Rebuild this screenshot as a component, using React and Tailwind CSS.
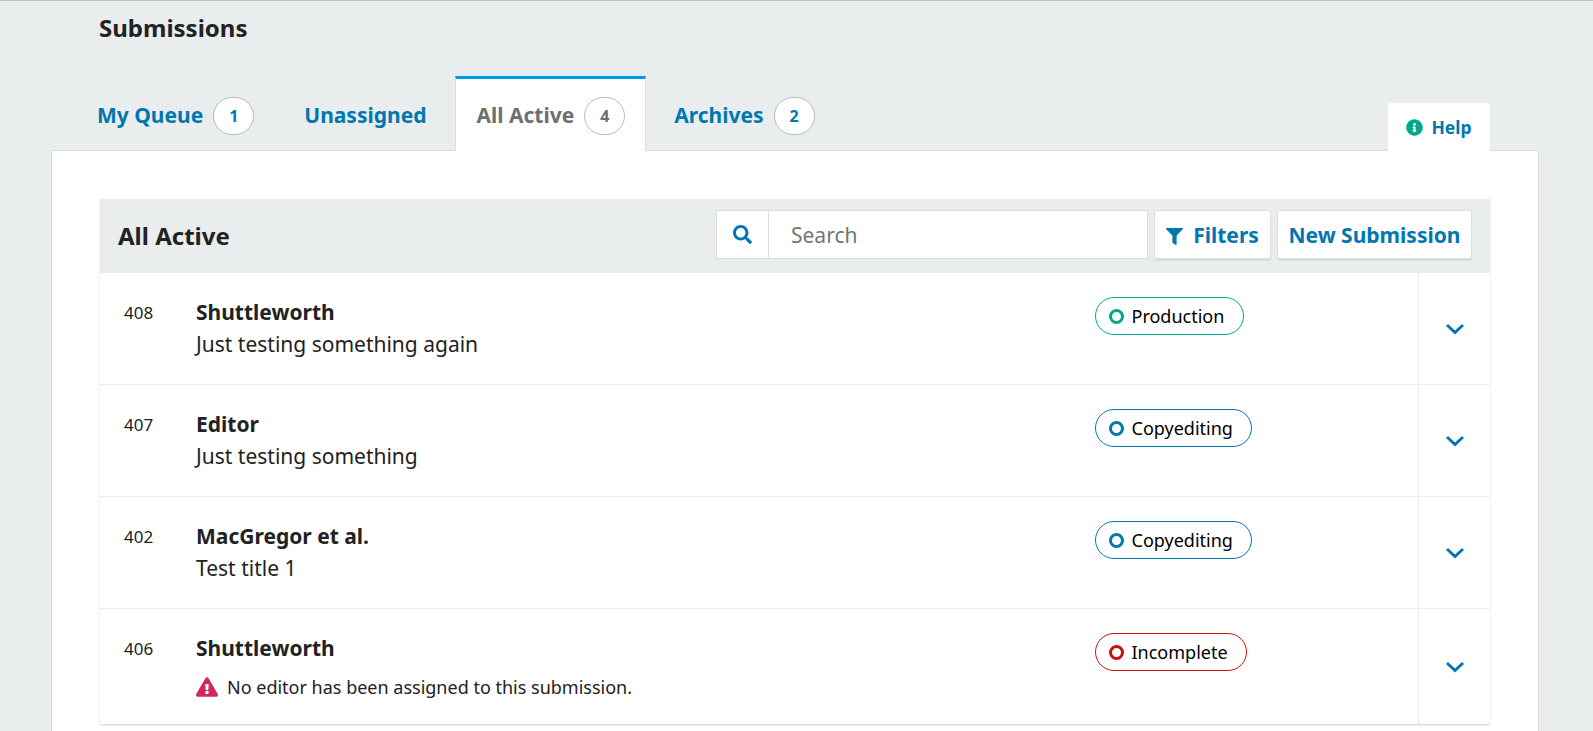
import React from "react";
import { FaSearch, FaFilter, FaInfoCircle, FaExclamationTriangle } from "react-icons/fa";

const blue = "text-[#0077b0]";

function Badge({ n, active }) {
  return (
    <span className={`ml-[10px] flex h-[38px] w-[41px] items-center justify-center rounded-full border border-[#bbbbbb] bg-white text-[16px] font-bold ${active ? "text-[#6f6f6f]" : blue}`}>
      {n}
    </span>
  );
}

function Tab({ label, n, active, className = "" }) {
  if (active) {
    return (
      <div className={`relative z-10 -mb-px flex h-[75px] items-center border-x border-[#dddddd] border-t-[3px] border-t-[#009de5] bg-white pl-[20px] pr-[20px] pt-[2px] ${className}`}>
        <span className="text-[21px] font-bold text-[#6f6f6f]">{label}</span>
        {n && <Badge n={n} active />}
      </div>
    );
  }
  return (
    <div className={`flex h-[74px] items-center pt-[6px] ${className}`}>
      <span className={`text-[21px] font-bold ${blue}`}>{label}</span>
      {n && <Badge n={n} />}
    </div>
  );
}

function Status({ label, ring, border, w }) {
  return (
    <span className={`flex h-[38px] items-center rounded-full border bg-white pl-[13px] text-[18px] leading-none text-black ${border} ${w}`}>
      <span className={`mr-[7.5px] h-[15px] w-[15px] rounded-full border-[3px] ${ring}`} />
      {label}
    </span>
  );
}

function Chevron() {
  return (
    <svg width="20" height="12" viewBox="0 0 20 12" fill="none" className="text-[#0077b0]">
      <path d="M2 2 L10 9.5 L18 2" stroke="currentColor" strokeWidth="3" />
    </svg>
  );
}

function Row({ id, author, title, warning, status, last }) {
  return (
    <div className={`flex ${last ? "h-[115px]" : "h-[112px] border-b border-[#eeeeee]"}`}>
      <div className="flex min-w-0 flex-1">
        <div className="w-[96px] pl-[24px] pt-[28px] text-[17px] leading-[24px] text-[#222222]">{id}</div>
        <div className="w-[899px] pt-[24px]">
          <div className="text-[21px] font-bold leading-[30px] text-[#222222]">{author}</div>
          {title && <div className="mt-[2px] text-[21px] leading-[30px] text-[#222222]">{title}</div>}
          {warning && (
            <div className="mt-[9px] flex h-[30px] items-center text-[18px] text-[#222222]">
              <FaExclamationTriangle className="mr-[9px] h-[22px] w-[22px] text-[#cf2a5c]" />
              {warning}
            </div>
          )}
        </div>
        <div className="pt-[24px]">{status}</div>
      </div>
      <div className="flex w-[72px] shrink-0 items-center justify-center border-l border-[#eeeeee]">
        <Chevron />
      </div>
    </div>
  );
}

export default function App() {
  return (
    <div className="h-[731px] overflow-hidden border-t border-[#b9bfc2] bg-[#eaedee] font-['Noto_Sans',sans-serif]">
      <h1 className="pl-[99px] pt-[11px] text-[24px] font-bold leading-[32px] text-[#222222]">Submissions</h1>

      <div className="mt-[32px] flex items-end pl-[97px] pr-[103px]">
        <Tab label="My Queue" n={1} />
        <Tab label="Unassigned" className="ml-[50px]" />
        <Tab label="All Active" n={4} active className="ml-[29px]" />
        <Tab label="Archives" n={2} className="ml-[28px]" />
        <div className="relative z-10 -mb-px ml-auto flex h-[48px] w-[102px] items-center justify-center rounded-t-[2px] bg-white">
          <FaInfoCircle className="mr-[8px] h-[17px] w-[17px] text-[#00a98a]" />
          <span className={`text-[17.5px] font-bold ${blue}`}>Help</span>
        </div>
      </div>

      <div className="ml-[51px] mr-[54px] h-[600px] rounded-t-[2px] border border-[#dddddd] bg-white px-[48px] pt-[48px]">
        <div className="rounded-[2px] shadow-[0_1px_2px_rgba(0,0,0,0.2)]">
          <div className="flex h-[74px] items-center bg-[#eaedee] pl-[18px] pr-[18px]">
            <h2 className="text-[24px] font-bold text-[#222222]">All Active</h2>
            <div className="mb-[3px] ml-auto flex h-[49px] w-[432px] rounded-[2px] border border-[#dddddd] bg-white">
              <div className="flex w-[52px] items-center justify-center border-r border-[#dddddd]">
                <FaSearch className={`h-[19px] w-[19px] ${blue}`} />
              </div>
              <span className="flex items-center pl-[22px] pt-[3px] text-[21px] text-[#757575]">Search</span>
            </div>
            <button className={`mb-[3px] ml-[6px] flex h-[49px] w-[117px] items-center justify-center rounded-[2px] border border-[#dddddd] bg-white pt-[3px] text-[21px] font-bold shadow-[0_2px_0_#dddddd] ${blue}`}>
              <FaFilter className="mr-[10px] h-[17px] w-[17px]" />
              Filters
            </button>
            <button className={`mb-[3px] ml-[6px] flex h-[49px] w-[195px] items-center justify-center rounded-[2px] border border-[#dddddd] bg-white pt-[3px] text-[21px] font-bold shadow-[0_2px_0_#dddddd] ${blue}`}>
              New Submission
            </button>
          </div>

          <Row id="408" author="Shuttleworth" title="Just testing something again"
            status={<Status label="Production" ring="border-[#00a98a]" border="border-[#00a98a]" w="w-[149px]" />} />
          <Row id="407" author="Editor" title="Just testing something"
            status={<Status label="Copyediting" ring="border-[#0077b0]" border="border-[#0077b0]" w="w-[157px]" />} />
          <Row id="402" author="MacGregor et al." title="Test title 1"
            status={<Status label="Copyediting" ring="border-[#0077b0]" border="border-[#0077b0]" w="w-[157px]" />} />
          <Row id="406" author="Shuttleworth" warning="No editor has been assigned to this submission." last
            status={<Status label="Incomplete" ring="border-[#c8100e]" border="border-[#c8100e]" w="w-[152px]" />} />
        </div>
      </div>
    </div>
  );
}
